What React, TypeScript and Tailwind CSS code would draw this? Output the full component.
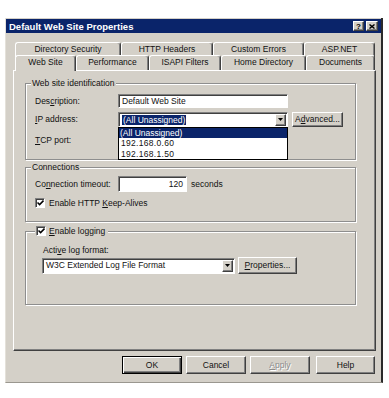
import React from "react";

const raised =
  "bg-[#d4d0c8] border border-t-white border-l-white border-r-[#404040] border-b-[#404040] shadow-[inset_-1px_-1px_0_#808080]";
const sunken =
  "bg-white border border-t-[#808080] border-l-[#808080] border-r-white border-b-white shadow-[inset_1px_1px_0_#404040]";
const groupBox =
  "border border-[#8e8e8e] shadow-[inset_1px_1px_0_#fff,1px_1px_0_#fff]";
const tabBase =
  "h-[15px] pt-[2px] text-center leading-[9px] bg-[#d4d0c8] border-t border-l border-r border-t-white border-l-white border-r-[#404040] rounded-t-[3px] shadow-[inset_-1px_0_0_#808080]";

function K({ children }: { children: React.ReactNode }) {
  return <span className="underline underline-offset-1">{children}</span>;
}

function DownArrow() {
  return (
    <div className={`${raised} w-[11px] h-[12px] flex items-center justify-center`}>
      <svg width="5" height="3" viewBox="0 0 5 3">
        <path d="M0 0h5L2.5 3z" fill="#000" />
      </svg>
    </div>
  );
}

function Check() {
  return (
    <div className={`${sunken} w-[10px] h-[10px] flex items-center justify-center`}>
      <svg width="7" height="6" viewBox="0 0 7 6">
        <path d="M0.5 2.5 L2.6 4.6 L6.5 0.6" stroke="#000" strokeWidth="1.5" fill="none" />
      </svg>
    </div>
  );
}

const row1 = [
  { label: "Directory Security", w: "w-[106px]" },
  { label: "HTTP Headers", w: "w-[92px]" },
  { label: "Custom Errors", w: "w-[91px]" },
  { label: "ASP.NET", w: "w-[71px]" },
];

const row2 = [
  { label: "Web Site", w: "w-[61px]", active: true },
  { label: "Performance", w: "w-[73px]" },
  { label: "ISAPI Filters", w: "w-[72px]" },
  { label: "Home Directory", w: "w-[85px]" },
  { label: "Documents", w: "w-[69px]" },
];

export default function App() {
  return (
    <div className="w-[389px] h-[398px] bg-white pt-[18px] pl-[5px] font-['Liberation_Sans',Arial,sans-serif] text-[8.5px] leading-[9px] text-[#111]">
      <div className="w-[378px] h-[365px] bg-[#d4d0c8] border-l border-b border-r-2 border-l-[#e4e1da] border-b-[#9a978f] border-r-[#2a2a2a] flex flex-col">
        {/* Title bar */}
        <div className="mt-[1px] h-[14px] bg-[#0a246a] flex items-center pl-[3px] pr-[3px]">
          <span className="font-bold text-white text-[9.5px]">Default Web Site Properties</span>
          <div className="ml-auto flex gap-[2px]">
            <div className={`${raised} w-[11px] h-[10px] flex items-center justify-center text-[8px] font-bold text-black`}>?</div>
            <div className={`${raised} w-[12px] h-[10px] flex items-center justify-center`}>
              <svg width="6" height="5" viewBox="0 0 6 5">
                <path d="M0.5 0.5 L5.5 4.5 M5.5 0.5 L0.5 4.5" stroke="#000" strokeWidth="1.4" />
              </svg>
            </div>
          </div>
        </div>

        {/* Tab control */}
        <div className="mt-[9px] ml-[7px] w-[363px]">
          <div className="flex pl-[2px]">
            {row1.map((t) => (
              <div key={t.label} className={`${tabBase} ${t.w}`}>
                {t.label}
              </div>
            ))}
          </div>
          <div className="flex pl-[2px] -mt-[2px] h-[15px] items-end">
            {row2.map((t) =>
              t.active ? (
                <div key={t.label} className={`${tabBase} ${t.w} h-[16px] -mb-[1px] relative z-10`}>
                  {t.label}
                </div>
              ) : (
                <div key={t.label} className={`${tabBase} ${t.w} h-[13px]`}>
                  {t.label}
                </div>
              )
            )}
          </div>

          {/* Tab page */}
          <div className="w-[363px] h-[281px] bg-[#d4d0c8] border border-t-white border-l-white border-r-[#404040] border-b-[#404040] shadow-[inset_-1px_-1px_0_#808080]">
            {/* Web site identification */}
            <div className={`${groupBox} mt-[12px] ml-[11px] w-[331px] h-[77px]`}>
              <div className="-mt-[5px] ml-[5px] px-[1px] w-fit bg-[#d4d0c8]">Web site identification</div>
              <div className="mt-[6px] ml-[9px] flex items-center h-[14px]">
                <div className="w-[83px]">
                  Des<K>c</K>ription:
                </div>
                <div className={`${sunken} w-[170px] h-[14px] px-[3px] flex items-center`}>Default Web Site</div>
              </div>
              <div className="mt-[4px] ml-[9px] flex items-center h-[15px]">
                <div className="w-[83px]">
                  <K>I</K>P address:
                </div>
                <div className={`${sunken} relative w-[170px] h-[15px] flex items-center pl-[3px] pr-[1px]`}>
                  <span className="bg-[#0a246a] text-white px-[1px] leading-[10px]">(All Unassigned)</span>
                  <div className="ml-auto">
                    <DownArrow />
                  </div>
                  <div className="absolute left-[-1px] top-[14px] w-[170px] h-[33px] bg-white border border-black z-20 flex flex-col tracking-[0.3px]">
                    <div className="h-[10px] bg-[#0a246a] text-white pl-[1px] leading-[10px] tracking-normal">(All Unassigned)</div>
                    <div className="h-[11px] leading-[11px] pl-[2px]">192.168.0.60</div>
                    <div className="h-[10px] leading-[10px] pl-[2px]">192.168.1.50</div>
                  </div>
                </div>
                <div className={`${raised} ml-[4px] w-[51px] h-[15px] flex items-center justify-center`}>
                  A<K>d</K>vanced...
                </div>
              </div>
              <div className="mt-[9px] ml-[9px]">
                <K>T</K>CP port:
              </div>
            </div>

            {/* Connections */}
            <div className={`${groupBox} mt-[7px] ml-[11px] w-[331px] h-[55px]`}>
              <div className="-mt-[5px] ml-[5px] px-[1px] w-fit bg-[#d4d0c8]">Connections</div>
              <div className="mt-[4px] ml-[9px] flex items-center h-[16px]">
                <div className="w-[83px]">
                  Co<K>n</K>nection timeout:
                </div>
                <div className={`${sunken} w-[69px] h-[16px] pr-[3px] flex items-center justify-end`}>120</div>
                <div className="ml-[4px]">seconds</div>
              </div>
              <div className="mt-[6px] ml-[9px] flex items-center">
                <Check />
                <div className="ml-[4px]">
                  Enable HTTP <K>K</K>eep-Alives
                </div>
              </div>
            </div>

            {/* Logging */}
            <div className={`${groupBox} mt-[9px] ml-[11px] w-[331px] h-[74px]`}>
              <div className="-mt-[6px] ml-[9px] px-[1px] w-fit h-[10px] bg-[#d4d0c8] flex items-center">
                <Check />
                <div className="ml-[3px] pr-[2px]">
                  <K>E</K>nable logging
                </div>
              </div>
              <div className="mt-[10px] ml-[17px]">
                Acti<K>v</K>e log format:
              </div>
              <div className="mt-[2px] ml-[16px] flex items-center">
                <div className={`${sunken} w-[193px] h-[16px] flex items-center pl-[3px] pr-[1px]`}>
                  <span>W3C Extended Log File Format</span>
                  <div className="ml-auto">
                    <DownArrow />
                  </div>
                </div>
                <div className={`${raised} ml-[3px] w-[59px] h-[17px] flex items-center justify-center`}>
                  <K>P</K>roperties...
                </div>
              </div>
            </div>
          </div>
        </div>

        {/* Buttons */}
        <div className="mt-[5px] ml-[116px] flex">
          <div className="w-[60px] h-[18px] bg-[#d4d0c8] border border-black shadow-[inset_1px_1px_0_#fff,inset_-1px_-1px_0_#404040,inset_-2px_-2px_0_#808080] flex items-center justify-center">
            OK
          </div>
          <div className={`${raised} ml-[4px] w-[60px] h-[18px] flex items-center justify-center`}>Cancel</div>
          <div className={`${raised} ml-[4px] w-[60px] h-[18px] flex items-center justify-center text-[#8c8c8c] [text-shadow:1px_1px_0_#fff]`}>
            <K>A</K>pply
          </div>
          <div className={`${raised} ml-[6px] w-[59px] h-[18px] flex items-center justify-center`}>Help</div>
        </div>
      </div>
    </div>
  );
}
